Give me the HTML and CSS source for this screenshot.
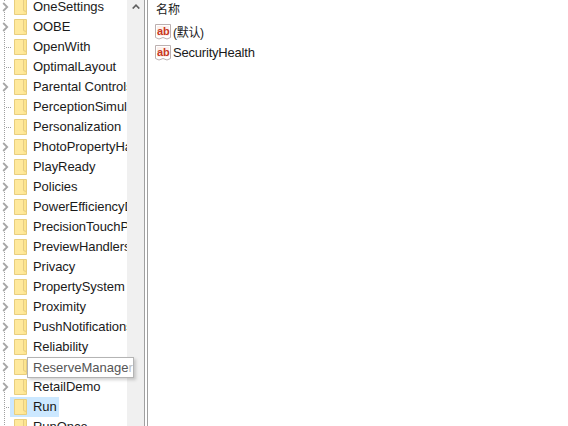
FILE: index.html
```html
<!DOCTYPE html>
<html lang="zh">
<head>
<meta charset="utf-8">
<title>Registry Editor</title>
<link rel="stylesheet" href="styles.css">
</head>
<body>
<svg class="defs" width="0" height="0" aria-hidden="true">
  <symbol id="folder" viewBox="0 0 13 16">
    <path d="M.5 .5H12.5V15.5H.5Z" fill="#fde58e" stroke="#e8ce7e"/>
    <path d="M1 1H9.5V15H1Z" fill="#ffe99c"/>
    <path d="M9.5 1V11.5L12 12.5" fill="none" stroke="#e6cd85"/>
  </symbol>
  <symbol id="chev" viewBox="0 0 7 10">
    <path d="M1.2 1L5.2 5L1.2 9" fill="none" stroke="#a6a6a6" stroke-width="1.8"/>
  </symbol>
  <symbol id="reg" viewBox="0 0 16 16">
    <path d="M.5 .5H15.5V13.5L12 15L8 13.5L4 15L.5 13.5Z" fill="#fff" stroke="#bcb0b0"/>
    <path d="M2 2H14V12H2Z" fill="#fdf0ec"/>
  </symbol>
</svg>
<div class="window">
  <nav class="tree">
    <ul class="rows">
      <li class="row"><svg class="chev"><use href="#chev"/></svg><svg class="folder"><use href="#folder"/></svg><span class="name">OneSettings</span></li>
      <li class="row"><svg class="chev"><use href="#chev"/></svg><svg class="folder"><use href="#folder"/></svg><span class="name">OOBE</span></li>
      <li class="row"><span class="dots"></span><svg class="folder"><use href="#folder"/></svg><span class="name">OpenWith</span></li>
      <li class="row"><span class="dots"></span><svg class="folder"><use href="#folder"/></svg><span class="name">OptimalLayout</span></li>
      <li class="row"><svg class="chev"><use href="#chev"/></svg><svg class="folder"><use href="#folder"/></svg><span class="name">Parental Controls</span></li>
      <li class="row"><span class="dots"></span><svg class="folder"><use href="#folder"/></svg><span class="name">PerceptionSimulation</span></li>
      <li class="row"><span class="dots"></span><svg class="folder"><use href="#folder"/></svg><span class="name">Personalization</span></li>
      <li class="row"><svg class="chev"><use href="#chev"/></svg><svg class="folder"><use href="#folder"/></svg><span class="name">PhotoPropertyHandler</span></li>
      <li class="row"><svg class="chev"><use href="#chev"/></svg><svg class="folder"><use href="#folder"/></svg><span class="name">PlayReady</span></li>
      <li class="row"><svg class="chev"><use href="#chev"/></svg><svg class="folder"><use href="#folder"/></svg><span class="name">Policies</span></li>
      <li class="row"><svg class="chev"><use href="#chev"/></svg><svg class="folder"><use href="#folder"/></svg><span class="name">PowerEfficiencyDiagnostics</span></li>
      <li class="row"><svg class="chev"><use href="#chev"/></svg><svg class="folder"><use href="#folder"/></svg><span class="name">PrecisionTouchPad</span></li>
      <li class="row"><svg class="chev"><use href="#chev"/></svg><svg class="folder"><use href="#folder"/></svg><span class="name">PreviewHandlers</span></li>
      <li class="row"><svg class="chev"><use href="#chev"/></svg><svg class="folder"><use href="#folder"/></svg><span class="name">Privacy</span></li>
      <li class="row"><svg class="chev"><use href="#chev"/></svg><svg class="folder"><use href="#folder"/></svg><span class="name">PropertySystem</span></li>
      <li class="row"><svg class="chev"><use href="#chev"/></svg><svg class="folder"><use href="#folder"/></svg><span class="name">Proximity</span></li>
      <li class="row"><svg class="chev"><use href="#chev"/></svg><svg class="folder"><use href="#folder"/></svg><span class="name">PushNotifications</span></li>
      <li class="row"><svg class="chev"><use href="#chev"/></svg><svg class="folder"><use href="#folder"/></svg><span class="name">Reliability</span></li>
      <li class="row"><svg class="chev"><use href="#chev"/></svg><svg class="folder"><use href="#folder"/></svg></li>
      <li class="row"><svg class="chev"><use href="#chev"/></svg><svg class="folder"><use href="#folder"/></svg><span class="name">RetailDemo</span></li>
      <li class="row selected"><span class="dots"></span><svg class="folder"><use href="#folder"/></svg><span class="name">Run</span></li>
      <li class="row"><span class="dots"></span><svg class="folder"><use href="#folder"/></svg><span class="name">RunOnce</span></li>
    </ul>
  </nav>
  <div class="scrollbar"><svg class="up" viewBox="0 0 8 5"><path d="M.7 4.5L4 1.2L7.3 4.5" fill="none" stroke="#606060" stroke-width="1.7"/></svg></div>
  <div class="divider"></div>
  <main class="values">
    <div class="head">名称</div>
    <div class="value"><span class="reg"><svg class="reg-bg"><use href="#reg"/></svg><span class="ab">ab</span></span><span class="vname cjk">(默认)</span></div>
    <div class="value"><span class="reg"><svg class="reg-bg"><use href="#reg"/></svg><span class="ab">ab</span></span><span class="vname">SecurityHealth</span></div>
  </main>
  <div class="tip">ReserveManage<span class="tip-fade">r</span></div>
</div>
</body>
</html>
```

FILE: styles.css
```css
* { box-sizing: border-box; }
html, body { margin: 0; padding: 0; height: 100%; background: #fff; overflow: hidden; }
body { font-family: "Liberation Sans", "Noto Sans CJK SC", sans-serif; font-size: 13px; color: #1a1a1a; }
.defs { position: absolute; }
.window { position: relative; display: flex; height: 426px; }
.tree { position: relative; width: 127px; height: 426px; overflow: hidden; flex: none; background: repeating-linear-gradient(180deg, #a0a0a0 0 1px, transparent 1px 2px) 4px 0 / 1px 100% no-repeat; }
.rows { list-style: none; margin: -3px 0 0; padding: 0; }
.row { position: relative; display: flex; align-items: center; height: 20px; white-space: nowrap; padding-left: 2px; }
.chev { width: 7px; height: 10px; flex: none; background: #fff; margin-right: 5px; }
.dots { width: 6px; flex: none; height: 1px; margin-left: 4px; margin-right: 2px; background: repeating-linear-gradient(90deg, #a0a0a0 0 1px, transparent 1px 2px); }
.folder { position: relative; width: 13px; height: 16px; flex: none; }
.name { position: relative; margin-left: 6px; line-height: 20px; letter-spacing: -0.05px; }
.selected::before { content: ""; position: absolute; left: 10px; top: 0; width: 49px; height: 20px; background: #cce8ff; }
.scrollbar { width: 17px; flex: none; background: #f0f0f0; display: flex; justify-content: center; padding-top: 4px; }
.up { width: 8px; height: 5px; }
.divider { width: 4px; flex: none; border-left: 1px solid #a0a0a0; border-right: 1px solid #a0a0a0; background: #fff; }
.values { flex: 1; padding-left: 8px; }
.head { height: 19px; margin-top: 2px; line-height: 16px; font-size: 12px; }
.value { display: flex; align-items: center; height: 21px; }
.reg { position: relative; width: 16px; height: 16px; flex: none; margin-right: 2px; margin-left: -1px; }
.reg-bg { position: absolute; inset: 0; width: 16px; height: 16px; }
.ab { position: absolute; left: 2px; top: 1px; font-size: 11px; line-height: 12px; font-weight: bold; color: #c8381e; }
.vname { letter-spacing: -0.2px; }
.cjk { font-size: 12px; letter-spacing: -0.3px; }
.tip { position: absolute; left: 27px; top: 357px; width: 107px; height: 21px; padding-left: 5px; line-height: 20px; color: #555; background: #fff; border: 1px solid #b4b4b4; box-shadow: 2px 2px 3px rgba(0,0,0,.18); white-space: nowrap; }
.tip-fade { color: #bbb; }
```
